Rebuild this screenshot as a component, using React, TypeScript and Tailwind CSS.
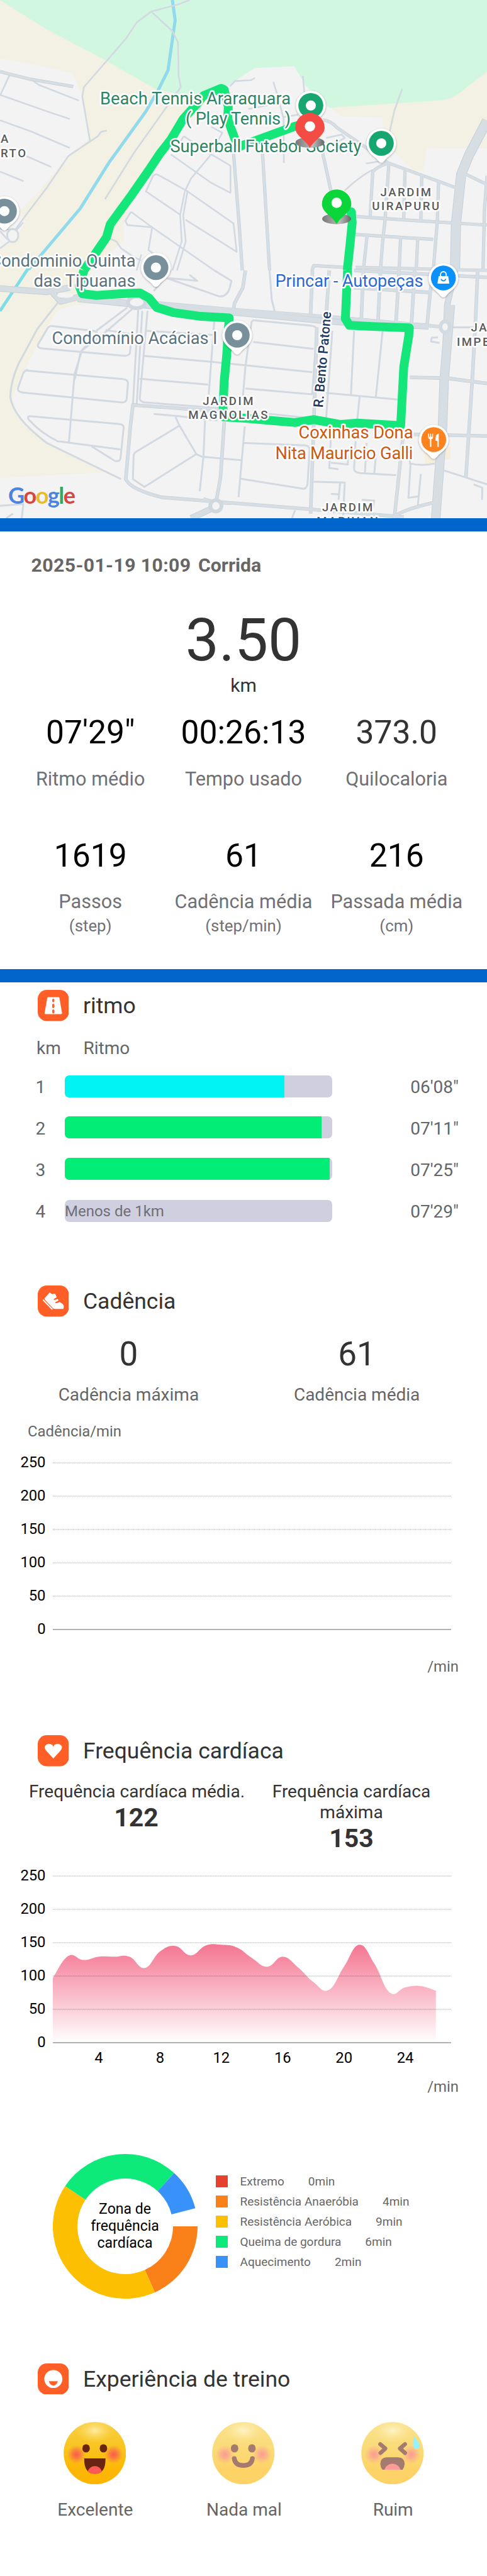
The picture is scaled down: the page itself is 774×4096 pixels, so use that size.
import React from "react";

/* ---------- map ---------- */

const UPPER = "scale(0.49362 0.27424)";
const LOWER = "translate(0 430) scale(0.49362 0.27424)";

const upperMinor = [
  "M610 0L575 25L487 67L440 130L405 225L345 350L270 505L265 560L290 820L220 905L150 1090L80 1255L50 1330",
  "M487 67L555 180L573 245L575 440L582 505L560 560L430 890L338 1155",
  "M290 820L315 790L325 765L344 757",
  "M740 500L757 470L808 465L821 452",
  "M975 440L985 640",
  "M880 475L895 560L913 690L914 945",
  "M1295 515L1270 640L1250 800",
  "M32 430L0 555",
  "M95 455L125 492L254 583",
  "M0 550L150 645L225 690",
  "M0 697L100 762L225 858",
  "M85 905L165 968",
  "M0 995L76 1050",
  "M680 895L742 960L742 1118L680 1060L550 895",
  "M592 790L570 850M592 790L680 895L615 1035L595 1110",
  "M680 735L716 770L700 820L680 890",
  "M507 1012Q495 1008 490 1030L470 1110L580 1245",
  "M507 1012L600 1105L752 1296L762 1460L598 1275",
  "M595 1110L580 1245L585 1400L555 1568",
  "M604 1105L590 1250L598 1400L570 1568",
  "M422 1228L404 1280L410 1305L490 1318L478 1450L500 1480",
  "M422 1228L490 1318L690 1568",
  "M355 1385L375 1400L390 1440L430 1490L455 1510",
  "M455 1475L440 1568",
  "M1200 985Q1160 1020 1110 1105",
  "M1178 948L1240 930",
  "M1050 800L1100 780L1110 800L1080 830",
  "M910 680L960 665",
  "M800 632L860 612",
  "M650 600L640 640",
  "M0 1340L25 1390M0 1440L30 1400",
  "M75 1290L55 1330L20 1330L0 1325",
];

const upperMid = [
  "M0 415L32 430L100 460L236 502",
  "M752 890L770 1300L780 1568",
  "M845 880L868 1568",
  "M1038 880L1066 1110",
  "M1040 695Q1065 700 1085 740L1250 945L1470 1090",
  "M1250 945Q1205 975 1200 1000L1192 1250",
  "M1252 950L1240 1270L1232 1400L1225 1568",
  "M1304 990L1300 1270",
  "M1358 1025L1355 1280",
  "M1412 1060L1408 1285L1395 1568",
  "M1145 1255L1300 1275L1568 1305",
  "M1145 1360L1395 1388",
  "M1182 1365L1170 1568",
  "M1290 1375L1285 1568",
  "M1345 1380L1340 1568",
  "M1568 1020L1560 1210L1555 1568",
  "M1005 1568L1010 1540L1110 1550",
  "M1145 1550L1568 1568",
  "M1500 1010L1568 1070",
];

const upperMajor = ["M1568 700L1510 900L1485 1010L1468 1300L1465 1568"];

const lowerMinor = [
  "M185 190L120 340L60 540Q35 640 33 730Q40 850 150 1000L390 1210",
  "M165 322L300 350Q320 360 310 380L265 460L240 600L222 995",
  "M165 322Q155 325 150 345L122 430Q120 450 135 452L400 495Q415 495 418 480L425 370L340 345",
  "M80 580L395 630Q412 632 412 655L408 745Q405 768 390 765L75 708Q55 705 58 680L75 595Q80 580 90 576",
  "M410 215L310 350M425 225L345 350L260 470L240 635",
  "M95 845L380 890Q400 892 398 915L388 1090Q385 1110 370 1105L295 1020",
  "M95 845Q85 850 95 870Q130 940 185 990L390 1038",
  "M445 230L428 780",
  "M458 235L440 780",
  "M475 235L450 740Q450 760 465 765L720 800",
  "M460 495L680 530L1005 590",
  "M450 628L670 662",
  "M472 350L690 375",
  "M690 290L672 720",
  "M820 290Q815 285 810 300L790 560L780 780",
  "M820 290L1000 320Q1022 325 1020 345L1005 720",
  "M815 415L1010 455",
  "M790 685L1005 718",
  "M860 830L990 855",
  "M1050 710L1280 748",
  "M1140 350L1130 720",
  "M1232 350L1210 735",
  "M1158 730L1150 870",
  "M1070 350L1050 860",
  "M495 832L575 845L700 870",
  "M565 850L578 900L435 1055Q430 1065 430 1080L428 1210L465 1255L632 1065L578 900",
  "M632 1065L650 1080L778 1100",
  "M660 870L655 1080L643 1280",
  "M788 905L768 1315",
  "M780 1000L985 1015Q998 1020 997 1040L990 1240Q985 1270 975 1265L775 1208",
  "M1065 980L1060 1145L1090 1153M1065 1115L1120 1125L1120 1070",
  "M1145 990L1140 1150Q1140 1170 1160 1175L1275 1187",
  "M1180 1000L1175 1175M1210 1080L1205 1180",
  "M1010 1225L1110 1230L1105 1420M1065 1295L1090 1298",
  "M1320 1060L1320 1120Q1360 1135 1400 1120",
  "M1355 1180L1348 1310L1315 1318L1322 1120M1348 1310L1345 1370",
  "M1430 1160L1568 1240M1525 1240L1553 1260L1552 1330",
  "M1165 1330L1205 1335L1200 1380M1095 1230L1090 1330",
  "M0 1365L75 1355L70 1437M20 1437L42 1410",
  "M530 40L705 150Q730 155 740 100L745 60L690 0M545 45L635 60L610 25",
  "M495 120L550 0",
  "M868 0L875 170L888 265",
  "M950 1390L940 1437",
  "M1410 388L1390 390L1388 412L1415 420",
  "M1568 330L1440 330",
];

const lowerMid = [
  "M790 0L782 100L755 190L750 250",
  "M1006 0L1000 255",
  "M1060 0L1050 270",
  "M1140 0L1568 40",
  "M1225 0L1217 300M1170 0L1163 295M1285 0L1275 300M1335 0L1325 310M1395 0L1385 130L1375 320",
  "M1140 100L1385 128",
  "M1538 0L1530 330L1520 650L1500 1200",
  "M1320 620L1440 625L1568 655",
  "M1310 950L1568 960",
  "M1300 925L1270 1430Q1290 1390 1400 1345",
  "M1020 330L1010 900L1000 1410",
  "M730 820L428 780L420 900L405 1210Q420 1270 520 1315L690 1340L1000 1385L1300 1430",
  "M722 880L710 1200L695 1350",
  "M450 180L735 225L1070 270L1440 330",
  "M655 1325L695 1345L745 1350",
];

const lowerMajor = [
  "M0 105L150 125L225 100M170 130L195 180L250 155L420 190",
  "M250 165L420 195L600 225L760 245L1090 300L1380 325",
  "M1465 0L1440 200L1430 640L1425 900L1400 1437",
  "M615 1437L695 1370",
];

const avenue = "M1450 200L1430 640L1425 900L1403 1437";

const routeUpper =
  "M1131 1225L1134 1290L1128 1400L1118 1568M985 715L945 735L770 850L755 800L733 690L735 620L722 520L712 512L655 555L640 590L590 690L550 810L515 890L480 985L420 1140L355 1300L343 1375L270 1568";
const routeLower =
  "M1119 0L1112 280L1125 318L1200 325L1318 333L1316 380L1300 560L1290 900L1150 885L1095 893L1010 865L950 882L870 870L790 857L720 850L718 790L722 640L730 490L738 275L640 265L560 245L505 215L480 160L450 130L390 135L310 145L265 135L255 90L270 0";

function Roads({ paths, width, color }: { paths: string[]; width: number; color: string }) {
  return (
    <>
      {paths.map((d) => (
        <path key={d} d={d} fill="none" stroke={color} strokeWidth={width} strokeLinejoin="round" vectorEffect="non-scaling-stroke" />
      ))}
    </>
  );
}

type LabelProps = {
  x: number;
  y: number;
  size?: number;
  color: string;
  anchor?: "start" | "middle" | "end";
  spacing?: number;
  weight?: number;
  length?: number;
  children: string;
};

function MapLabel({ x, y, size = 27.3, color, anchor = "end", spacing = 0, weight = 400, length, children }: LabelProps) {
  return (
    <text
      x={x}
      y={y}
      fontSize={size}
      fill={color}
      textAnchor={anchor}
      letterSpacing={spacing}
      fontWeight={weight}
      textLength={length}
      stroke="#fff"
      strokeWidth={5}
      strokeLinejoin="round"
      paintOrder="stroke"
    >
      {children}
    </text>
  );
}

function District({ x, y, anchor = "middle", children }: { x: number; y: number; anchor?: "start" | "middle"; children: string }) {
  return (
    <MapLabel x={x} y={y} size={18.6} spacing={2.5} weight={500} anchor={anchor} color="#585a5c">
      {children}
    </MapLabel>
  );
}

function Pin({ x, y, color, children }: { x: number; y: number; color: string; children?: React.ReactNode }) {
  return (
    <g transform={`translate(${x} ${y})`}>
      <path d="M0 30.500C-2.500 30.500-4.500 28.500-7 25C-10 21-23.500 15-23.500 0A23.500 23.500 0 1 1 23.500 0C23.500 15 10 21 7 25C4.500 28.500 2.500 30.500 0 30.500Z" fill="#fff" filter="url(#pinShadow)" />
      <circle r="19.800" fill={color} />
      {children ?? <circle r="8" fill="#fff" />}
    </g>
  );
}

function Marker({ x, y, color }: { x: number; y: number; color: string }) {
  return (
    <g transform={`translate(${x} ${y})`}>
      <ellipse cy="23.500" rx="23" ry="8.500" fill="url(#markerShadow)" />
      <path d="M0 32C-7 19-23.300 13-23.300 0A23.300 23.300 0 1 1 23.300 0C23.300 13 7 19 0 32Z" fill={color} />
      <circle cy="-2" r="8.300" fill="#fff" />
    </g>
  );
}

function RouteMap() {
  return (
    <svg className="block h-[824px] w-[774px]" viewBox="0 0 774 824" fontFamily="Roboto, sans-serif">
      <defs>
        <filter id="pinShadow" x="-30%" y="-30%" width="160%" height="160%">
          <feDropShadow dx="0" dy="1" stdDeviation="1.5" floodColor="#000" floodOpacity="0.35" />
        </filter>
        <linearGradient id="markerShadow">
          <stop offset="0" stopColor="#777" />
          <stop offset="0.6" stopColor="#bbb" />
          <stop offset="1" stopColor="#666" />
        </linearGradient>
      </defs>
      <rect width="774" height="824" fill="#f4f3f4" />
      <g transform={UPPER}>
        <path d="M0 0L700 500L610 600L560 780L500 960L420 1180L400 1300L400 1390L300 1568L0 1568L0 1440L50 1390L80 1290L60 1230L130 1100L220 900L290 800L265 560L235 425L100 370L0 340Z" fill="#f3f0e4" />
        <path d="M1040 590L1440 570L1568 400L1568 860L1375 862L1362 985Q1345 1000 1325 975L1240 830L1230 680L1100 675Z" fill="#f3f0e4" />
        <path d="M0 0L1568 0L1568 415L1500 510Q1460 575 1420 582L1060 625L985 500L947 385L820 395L735 495L610 560L500 515L330 340L150 170Z" fill="#d1f7e1" />
        <path d="M555 0L564 118L555 230L541 408L510 520L470 645L350 945L258 1210L90 1568" fill="none" stroke="#90daeb" strokeWidth="5" vectorEffect="non-scaling-stroke" />
      </g>
      <g transform={LOWER}>
        <path d="M0 -1L300 -1L245 90L330 190Q200 200 180 245L130 400L60 640L40 740L60 850L150 990L340 1170L0 1205Z" fill="#f3f0e4" />
        <path d="M90 -10L0 235" fill="none" stroke="#7fdde6" strokeWidth="5" vectorEffect="non-scaling-stroke" />
        <path d="M1365 1060L1450 1020L1450 1090L1370 1130Z" fill="#f5eedc" />
      </g>
      <g transform={UPPER}>
        <Roads paths={upperMinor} width={2.6} color="#d2d9e0" />
        <ellipse cx="41" cy="1365" rx="18" ry="38" fill="none" stroke="#d3d9e0" strokeWidth="3" vectorEffect="non-scaling-stroke" />
      </g>
      <g transform={LOWER}>
        <Roads paths={lowerMinor} width={3} color="#d3d9e0" />
      </g>
      <g transform={UPPER}>
        <Roads paths={upperMid} width={5.2} color="#c6d0d8" />
        <Roads paths={upperMajor} width={16} color="#c6d0d8" />
      </g>
      <g transform={LOWER}>
        <Roads paths={lowerMid} width={5.6} color="#c6d0d8" />
        <Roads paths={lowerMajor} width={10} color="#c6d0d8" />
        <Roads paths={[avenue]} width={15} color="#c6d0d8" />
        <Roads paths={lowerMid} width={4.2} color="#d6dee4" />
        <Roads paths={lowerMajor} width={8} color="#d6dee4" />
        <Roads paths={[avenue]} width={13} color="#d6dee4" />
        <ellipse cx="210" cy="145" rx="26" ry="14" fill="#f4f3f4" />
        <ellipse cx="440" cy="185" rx="28" ry="34" fill="#f4f3f4" stroke="#d0d8df" strokeWidth="6" vectorEffect="non-scaling-stroke" />
        <ellipse cx="1433" cy="327" rx="15" ry="32" fill="#f4f3f4" stroke="#d3dbe2" strokeWidth="6" vectorEffect="non-scaling-stroke" />
        <ellipse cx="695" cy="1365" rx="18" ry="33" fill="#f4f3f4" stroke="#d0d8df" strokeWidth="6" vectorEffect="non-scaling-stroke" />
      </g>
      <g transform={UPPER}>
        <Roads paths={upperMid} width={3.8} color="#d6dee4" />
        <Roads paths={upperMajor} width={14} color="#d6dee4" />
        <Roads paths={[routeUpper]} width={14} color="#15e67a" />
        <path d="M1131 1228L1131 1260" stroke="#15e67a" strokeWidth="14" strokeLinecap="round" vectorEffect="non-scaling-stroke" />
      </g>
      <g transform={LOWER}>
        <Roads paths={[routeLower]} width={14} color="#15e67a" />
      </g>

      <MapLabel x={462} y={165.6} color="#2e8463" length={303}>Beach Tennis Araraquara</MapLabel>
      <MapLabel x={462} y={197.7} color="#2e8463" length={167}>( Play Tennis )</MapLabel>
      <MapLabel x={574.5} y={241.6} color="#2e8463" length={304}>Superball Futebol Society</MapLabel>
      <MapLabel x={215.5} y={423.7} color="#5b7380" length={231}>Condominio Quinta</MapLabel>
      <MapLabel x={215.5} y={456} color="#5b7380" length={162}>das Tipuanas</MapLabel>
      <MapLabel x={345.5} y={547} color="#5b7380" length={263}>Condomínio Acácias I</MapLabel>
      <MapLabel x={672.5} y={456} color="#2c68d4" length={235}>Princar - Autopeças</MapLabel>
      <District x={646} y={311.5}>JARDIM</District>
      <District x={646} y={334.3}>UIRAPURU</District>
      <District x={363.6} y={643.6}>JARDIM</District>
      <District x={363.6} y={666}>MAGNOLIAS</District>
      <District x={553.4} y={835}>MARIVAN</District>
      <District x={553.4} y={813}>JARDIM</District>
      <District x={1} y={227.3} anchor="start">A</District>
      <District x={1} y={249.8} anchor="start">RTO</District>
      <District x={748.5} y={527} anchor="start">JA</District>
      <District x={726} y={549.6} anchor="start">IMPE</District>
      <g transform="translate(513 648.500) rotate(-85)">
        <MapLabel x={0} y={0} size={21.5} weight={500} anchor="start" color="#1f3a5f" length={153}>R. Bento Patone</MapLabel>
      </g>

      <Pin x={494} y={167.8} color="#17a66f" />
      <Pin x={606} y={227.9} color="#17a66f" />
      <Pin x={7} y={335.7} color="#78909c" />
      <Pin x={247.8} y={425.5} color="#78909c" />
      <Pin x={377} y={533} color="#78909c" />
      <Pin x={704.7} y={442} color="#0a91fb">
        <path d="M-7.500 -3H7.500L9.500 9H-9.500Z" fill="#fff" />
        <path d="M-4.500 -3V-5.500A4.500 4.500 0 0 1 4.500 -5.500V-3" fill="none" stroke="#fff" strokeWidth="1.800" />
        <path d="M-3.500 1.500A3.500 3 0 0 0 3.500 1.500" fill="none" stroke="#0a91fb" strokeWidth="1.800" />
      </Pin>
      <MapLabel x={656.5} y={697.4} color="#cb5a11" length={182}>Coxinhas Dona</MapLabel>
      <MapLabel x={656.5} y={729.5} color="#cb5a11" length={219}>Nita Mauricio Galli</MapLabel>
      <Pin x={689.3} y={699} color="#fd8220">
        <path d="M-8.800 -9.500V-4Q-8.800 -1 -6 -0.500V11.500H-3.800V-0.500Q-1 -1 -1 -4V-9.500H-2.500V-4.500H-4.200V-9.500H-5.700V-4.500H-7.300V-9.500Z" fill="#fff" />
        <path d="M8 -9.500Q3 -8.500 3 -3V2H5.800V11.500H8Z" fill="#fff" />
      </Pin>
      <Marker x={492.6} y={203} color="#f44b45" />
      <Marker x={535} y={324.5} color="#0bd639" />

      <text x="13" y="800.500" fontSize="36" fontFamily="Lato, sans-serif" fontWeight="700" textLength="107">
        <tspan fill="#4a84e0">G</tspan>
        <tspan fill="#d6483f">o</tspan>
        <tspan fill="#e8bd2b">o</tspan>
        <tspan fill="#4a84e0">g</tspan>
        <tspan fill="#3aa65b">l</tspan>
        <tspan fill="#d6483f">e</tspan>
      </text>
    </svg>
  );
}

/* ---------- summary ---------- */

function Stat({ value, label, unit, dark }: { value: string; label: string; unit?: string; dark?: boolean }) {
  return (
    <div className="flex flex-col items-center whitespace-nowrap">
      <div className={dark ? "text-[51.6px] leading-[60px] text-[#333]" : "text-[51.6px] leading-[60px] text-black"}>{value}</div>
      <div className="mt-[25.5px] text-[30.6px] leading-[36px] text-[#707075]">{label}</div>
      {unit && <div className="mt-[2.5px] text-[25.8px] leading-[34px] text-[#707075]">{unit}</div>}
    </div>
  );
}

function Summary() {
  return (
    <section className="h-[696px] pt-[36px]">
      <h1 className="pl-[49.5px] text-[30.2px] leading-[36px] font-bold text-[#666]">
        <span className="tracking-[0.4px]">2025-01-19 10:09</span> <span className="ml-[4px]">Corrida</span>
      </h1>
      <div className="mt-[46px] text-center text-[94.6px] leading-[110px] text-[#333]">3.50</div>
      <div className="-mt-[1px] text-center text-[30.1px] leading-[36px] text-[#333]">km</div>
      <div className="mx-[22px] mt-[27px] grid grid-cols-3">
        <Stat value={"07'29\""} label="Ritmo médio" />
        <Stat value="00:26:13" label="Tempo usado" />
        <Stat value="373.0" label="Quilocaloria" dark />
      </div>
      <div className="mx-[22px] mt-[74px] grid grid-cols-3">
        <Stat value="1619" label="Passos" unit="(step)" />
        <Stat value="61" label="Cadência média" unit="(step/min)" />
        <Stat value="216" label="Passada média" unit="(cm)" />
      </div>
    </section>
  );
}

/* ---------- section heading ---------- */

function Heading({ title, children }: { title: string; children: React.ReactNode }) {
  return (
    <div className="flex h-[50px] items-center pl-[59.5px]">
      <svg className="h-[49.5px] w-[49.5px] shrink-0" viewBox="0 0 100 100">
        <rect width="100" height="100" rx="29" fill="#ff5f26" />
        {children}
      </svg>
      <h2 className="ml-[23px] text-[35.5px] leading-[42px] text-[#333]">{title}</h2>
    </div>
  );
}

/* ---------- pace ---------- */

const laps = [
  { km: 1, pace: "06'08\"", width: 348.5, fill: "bg-[#00f4f1]", lift: "mb-[2px]" },
  { km: 2, pace: "07'11\"", width: 407.7, fill: "bg-[#02ed75]", lift: "mb-[5px]" },
  { km: 3, pace: "07'25\"", width: 420.5, fill: "bg-[#02ed75]", lift: "mb-[5px]" },
  { km: 4, pace: "07'29\"", width: 0, fill: "", lift: "mb-[2px]", note: "Menos de 1km" },
];

function Pace() {
  return (
    <section className="h-[482px] pt-[12px]">
      <Heading title="ritmo">
        <path d="M33 23H67Q69 23 69.500 26L78 74Q78 78 74 78H26Q22 78 22 74L30.500 26Q31 23 33 23Z" fill="#fff" />
        <path d="M50 32V36M50 48V55M50 66V72" stroke="#ff5f26" strokeWidth="7" strokeLinecap="round" />
      </Heading>
      <div className="mt-[26px] flex pl-[58px] text-[28px] leading-[34px] text-[#666]">
        <span className="w-[74.5px]">km</span>
        <span>Ritmo</span>
      </div>
      <div className="mt-[11.5px] flex flex-col">
        {laps.map((lap) => (
          <div key={lap.km} className="flex h-[66px] items-center pr-[45px] text-[28px] leading-[34px] text-[#666]">
            <span className="w-[103px] pl-[56.5px]">{lap.km}</span>
            <div className={`flex h-[35px] w-[425px] items-center overflow-hidden rounded-[7px] bg-[#cfcfdf] ${lap.lift}`}>
              {lap.note ? (
                <span className="pt-[1px] text-[24px] text-[#6f6f78]">{lap.note}</span>
              ) : (
                <div className={`h-full ${lap.fill}`} style={{ width: lap.width }} />
              )}
            </div>
            <span className="ml-auto">{lap.pace}</span>
          </div>
        ))}
      </div>
    </section>
  );
}

/* ---------- charts ---------- */

const ticks = [250, 200, 150, 100, 50, 0];
const heartRate = [97, 130, 124, 129, 129, 129, 112, 137, 145, 131, 146, 147, 143, 127, 114, 129, 113, 91, 79, 114, 147, 118, 75, 83, 85, 78];

function areaPath(values: number[]) {
  const pts = values.map((v, i) => [84 + i * 24.35, 277 - v * 1.0596]);
  let d = `M${pts[0][0]} ${pts[0][1]}`;
  for (let i = 0; i < pts.length - 1; i++) {
    const p0 = pts[i - 1] ?? pts[i];
    const p1 = pts[i];
    const p2 = pts[i + 1];
    const p3 = pts[i + 2] ?? p2;
    const k = 0.21;
    d += `C${p1[0] + (p2[0] - p0[0]) * k} ${p1[1] + (p2[1] - p0[1]) * k} ${p2[0] - (p3[0] - p1[0]) * k} ${p2[1] - (p3[1] - p1[1]) * k} ${p2[0]} ${p2[1]}`;
  }
  return `${d}V277H84Z`;
}

function Chart({ values }: { values?: number[] }) {
  return (
    <svg className="block h-[320px] w-[774px]" viewBox="0 0 774 320" fontFamily="Roboto, sans-serif" fontSize="23.8" fontWeight="400">
      <defs>
        <linearGradient id="area" x1="0" y1="0" x2="0" y2="1">
          <stop offset="0" stopColor="#f47591" />
          <stop offset="1" stopColor="#f47591" stopOpacity="0" />
        </linearGradient>
      </defs>
      {values && <path d={areaPath(values)} fill="url(#area)" />}
      {ticks.map((t, i) => (
        <g key={t}>
          <text x="72.500" y={12 + i * 53 + 6.5} textAnchor="end">
            {t}
          </text>
          {t > 0 ? (
            <line x1="84" x2="717" y1={12 + i * 53} y2={12 + i * 53} stroke="#000" strokeOpacity="0.38" strokeWidth="1.200" strokeDasharray="1 1" />
          ) : (
            <line x1="84" x2="717" y1="277" y2="277" stroke="#999" strokeWidth="1.400" />
          )}
        </g>
      ))}
      {values &&
        [4, 8, 12, 16, 20, 24].map((m) => (
          <text key={m} x={84 + (m - 1) * 24.35} y="308.500" textAnchor="middle">
            {m}
          </text>
        ))}
    </svg>
  );
}

function Cadence() {
  return (
    <section className="h-[715px]">
      <Heading title="Cadência">
        <path d="M22 41L37 24Q39 21 42 25Q47 29 51 27Q56 25 58 31L61 38L52 43Q50 46 54 47L64 43L67 48L56 54Q56 58 60 57L70 53L80 59Q86 66 82 75H54Q50 75 48 72L24 47Q21 44 22 41Z" fill="#fff" />
        <path d="M18 47L46 76" stroke="#fff" strokeWidth="4" strokeLinecap="round" />
      </Heading>
      <div className="mt-[29px] mr-[25.5px] ml-[23px] grid grid-cols-2 text-center">
        <div>
          <div className="text-[53px] leading-[60px] text-[#333]">0</div>
          <div className="mt-[18px] text-[28px] leading-[34px] text-[#666]">Cadência máxima</div>
        </div>
        <div>
          <div className="text-[53px] leading-[60px] text-[#333]">61</div>
          <div className="mt-[18px] text-[28px] leading-[34px] text-[#666]">Cadência média</div>
        </div>
      </div>
      <div className="mt-[27px] pl-[44px] text-[23.9px] leading-[28px] text-[#666]">Cadência/min</div>
      <div className="mt-[23.5px]">
        <Chart />
      </div>
      <div className="mt-[2px] pr-[45px] text-right text-[23.9px] leading-[28px] text-[#666]">/min</div>
    </section>
  );
}

function HeartRate() {
  return (
    <section className="h-[665.5px]">
      <Heading title="Frequência cardíaca">
        <path d="M50 75L28 51Q19 41 24 34Q31 25 42 29Q48 31 50 37Q52 31 58 29Q69 25 76 34Q81 41 72 51Z" fill="#fff" />
      </Heading>
      <div className="mt-[22.5px] flex pl-[46px] text-center text-[#333]">
        <div className="w-[341px]">
          <div className="text-[28px] leading-[33px] whitespace-nowrap">Frequência cardíaca média.</div>
          <div className="text-[41px] leading-[50px] font-bold">122</div>
        </div>
        <div className="w-[343px]">
          <div className="text-[28px] leading-[33px]">
            Frequência cardíaca
            <br />
            máxima
          </div>
          <div className="text-[41px] leading-[50px] font-bold">153</div>
        </div>
      </div>
      <div className="mt-[23.5px]">
        <Chart values={heartRate} />
      </div>
      <div className="mt-[12.5px] pr-[45px] text-right text-[23.9px] leading-[28px] text-[#666]">/min</div>
    </section>
  );
}

/* ---------- zones ---------- */

const zones = [
  { name: "Extremo", min: 0, color: "#e6402f" },
  { name: "Resistência Anaeróbia", min: 4, color: "#fa811a" },
  { name: "Resistência Aeróbica", min: 9, color: "#fdbf02" },
  { name: "Queima de gordura", min: 6, color: "#0eea79" },
  { name: "Aquecimento", min: 2, color: "#3892fa" },
];

function slice(from: number, to: number) {
  const pt = (r: number, a: number) => `${115 + r * Math.cos((a * Math.PI) / 180)} ${115 + r * Math.sin((a * Math.PI) / 180)}`;
  const large = to - from > 180 ? 1 : 0;
  return `M${pt(115, from)}A115 115 0 ${large} 1 ${pt(115, to)}L${pt(76, to)}A76 76 0 ${large} 0 ${pt(76, from)}Z`;
}

function Zones() {
  const perMinute = 345.5 / 21;
  let angle = 0;
  const slices = zones.map((z) => {
    const from = angle;
    angle += z.min * perMinute;
    return { ...z, d: slice(from, angle) };
  });
  return (
    <section className="flex h-[333px] items-start pl-[83.5px]">
      <div className="grid h-[230px] w-[230px] place-items-center">
        <svg className="col-start-1 row-start-1 h-[230px] w-[230px]" viewBox="0 0 230 230">
          {slices.map((s) => (
            <path key={s.name} d={s.d} fill={s.color} />
          ))}
        </svg>
        <div className="col-start-1 row-start-1 text-center text-[23px] leading-[27.3px] text-black">
          Zona de
          <br />
          frequência
          <br />
          cardíaca
        </div>
      </div>
      <ul className="mt-[28px] ml-[29.5px]">
        {zones.map((z) => (
          <li key={z.name} className="flex h-[32px] items-center text-[19px] leading-[24px] text-[#666]">
            <span className="h-[19px] w-[19px]" style={{ backgroundColor: z.color }} />
            <span className="ml-[19.5px]">{z.name}</span>
            <span className="ml-[38px]">{z.min}min</span>
          </li>
        ))}
      </ul>
    </section>
  );
}

/* ---------- experience ---------- */

function Face({ faded, mood }: { faded?: boolean; mood: "great" | "fine" | "bad" }) {
  return (
    <svg className={faded ? "h-[99.5px] w-[99.5px] opacity-60" : "h-[99.5px] w-[99.5px]"} viewBox="0 0 100 100">
      <defs>
        <linearGradient id="skin" x1="0" y1="0" x2="0" y2="1">
          <stop offset="0" stopColor="#f7cf45" />
          <stop offset="0.45" stopColor="#f9c31b" />
          <stop offset="0.75" stopColor="#fdb705" />
          <stop offset="1" stopColor="#fdb502" />
        </linearGradient>
        <radialGradient id="shine">
          <stop offset="0" stopColor="#fff0b0" stopOpacity="0.9" />
          <stop offset="1" stopColor="#fbd84e" stopOpacity="0" />
        </radialGradient>
        <radialGradient id="blush">
          <stop offset="0" stopColor="#f9504f" stopOpacity="0.9" />
          <stop offset="0.4" stopColor="#f9604f" stopOpacity="0.7" />
          <stop offset="1" stopColor="#f9704f" stopOpacity="0" />
        </radialGradient>
        <clipPath id="grin">
          <path d="M33 58H67Q67.500 83 50 83Q32.500 83 33 58Z" />
        </clipPath>
        <clipPath id="wail">
          <path d="M41 56.500H59Q69.500 57 69.500 67Q69 73 66 76.500H34Q31 73 30.500 67Q30.500 57 41 56.500Z" />
        </clipPath>
      </defs>
      <circle cx="50" cy="50" r="49.800" fill="url(#skin)" />
      <ellipse cx="50" cy="14" rx="32" ry="20" fill="url(#shine)" />
      <circle cx="20.500" cy="52" r="15" fill="url(#blush)" />
      <circle cx="80" cy="52" r="15" fill="url(#blush)" />
      {mood !== "bad" && (
        <>
          <ellipse cx="36" cy="42.200" rx="6" ry="6.600" fill="#6a2412" />
          <ellipse cx="63.700" cy="42.200" rx="6" ry="6.600" fill="#6a2412" />
        </>
      )}
      {mood === "great" && (
        <g clipPath="url(#grin)">
          <rect x="30" y="55" width="40" height="30" fill="#6a2412" />
          <circle cx="50" cy="82" r="11.500" fill="#fd5a55" />
        </g>
      )}
      {mood === "fine" && <path d="M35.500 58.500Q37 69.500 50 69.500Q63 69.500 64.500 58.500" fill="none" stroke="#6a2412" strokeWidth="7.500" strokeLinecap="round" />}
      {mood === "bad" && (
        <>
          <path d="M30.500 35.500L38.500 42.500L31 49.500M70 35.500L62 42.500L70 49.500" fill="none" stroke="#6a2412" strokeWidth="6.500" strokeLinecap="round" strokeLinejoin="round" />
          <g clipPath="url(#wail)">
            <rect x="28" y="54" width="44" height="26" fill="#6a2412" />
            <circle cx="50" cy="80" r="13.200" fill="#fd5a55" />
          </g>
          <path d="M84.500 23Q93.500 33 93.500 38Q93 43.500 88 43.500Q83 42 82.800 37Q82.800 30 84.500 23Z" fill="#4fe9fb" />
        </>
      )}
    </svg>
  );
}

function Experience() {
  return (
    <section>
      <Heading title="Experiência de treino">
        <circle cx="50" cy="50" r="29" fill="#fff" />
        <path d="M36 57H64Q62 70 50 71Q38 70 36 57Z" fill="#ff5f26" />
      </Heading>
      <div className="mx-[32px] mt-[43px] grid grid-cols-3 text-[28px] leading-[34px] text-[#666]">
        <div className="flex flex-col items-center gap-[24px]">
          <Face mood="great" />
          <span className="pl-[2px]">Excelente</span>
        </div>
        <div className="flex flex-col items-center gap-[24px]">
          <Face mood="fine" faded />
          <span className="pl-[2px]">Nada mal</span>
        </div>
        <div className="flex flex-col items-center gap-[24px]">
          <Face mood="bad" faded />
          <span className="pl-[2px]">Ruim</span>
        </div>
      </div>
    </section>
  );
}

export default function App() {
  return (
    <main className="h-[4096px] w-[774px] overflow-hidden bg-white font-[Roboto,sans-serif]">
      <RouteMap />
      <div className="h-[21px] bg-[#0066cc]" />
      <Summary />
      <div className="h-[21px] bg-[#0066cc]" />
      <Pace />
      <Cadence />
      <HeartRate />
      <Zones />
      <Experience />
    </main>
  );
}
